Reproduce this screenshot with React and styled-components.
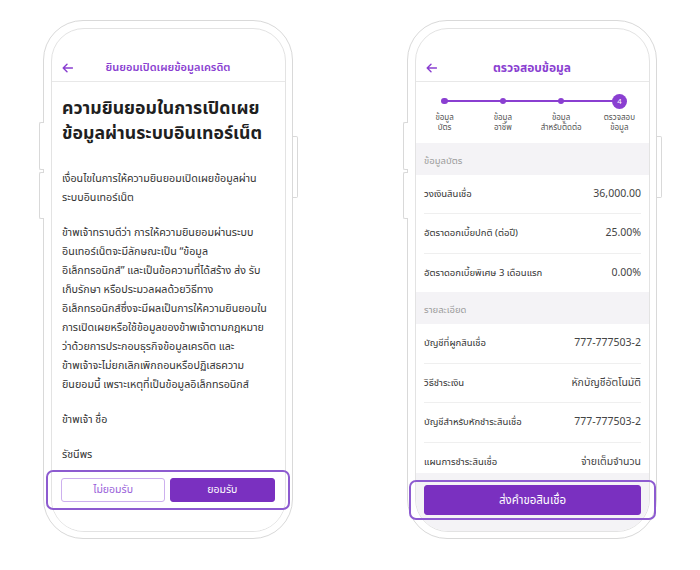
import React from "react";
import styled, { createGlobalStyle } from "styled-components";

const GlobalStyle = createGlobalStyle`
  html, body {
    margin: 0;
    padding: 0;
    background: #ffffff;
  }
  body {
    font-family: "Noto Sans Thai", "Noto Sans Thai Looped", "Noto Sans", "Liberation Sans", sans-serif;
    -webkit-font-smoothing: antialiased;
  }
`;

const PURPLE = "#7a30c0";
const PURPLE_TEXT = "#8a3fd1";

const Page = styled.div`
  width: 700px;
  height: 570px;
  box-sizing: border-box;
  padding: 20px 0 0 43px;
  display: flex;
  gap: 114px;
`;

const Phone = styled.div`
  position: relative;
  width: 250px;
  height: 519px;
  box-sizing: border-box;
  border: 1.5px solid #d9d9d9;
  border-radius: 40px;
  padding: 6.5px;
  background: #fff;
`;

const SideKey = styled.span`
  position: absolute;
  top: ${(p) => p.$top}px;
  height: ${(p) => p.$h}px;
  width: 5px;
  box-sizing: border-box;
  border: 1.5px solid #d9d9d9;
  background: #fff;
  ${(p) =>
    p.$side === "left"
      ? "left: -5px; border-right: none; border-radius: 2px 0 0 2px;"
      : "right: -5.5px; border-left: none; border-radius: 0 2px 2px 0;"}
`;

const Screen = styled.div`
  position: relative;
  height: 100%;
  box-sizing: border-box;
  border: 1.5px solid #e3e3e3;
  border-radius: 33px;
  display: flex;
  flex-direction: column;
  background: #fff;
`;

const Header = styled.div`
  margin-top: 26px;
  height: 26px;
  display: grid;
  grid-template-columns: 32px 1fr 32px;
  align-items: center;
  border-bottom: 1px solid #e8e8e8;
`;

const Back = styled.div`
  padding-left: 10px;
  display: flex;
  align-items: center;
`;

const HeaderTitle = styled.div`
  text-align: center;
  color: ${PURPLE_TEXT};
  font-size: ${(p) => (p.$big ? "12px" : "11px")};
  font-weight: ${(p) => (p.$big ? 700 : 600)};
  white-space: nowrap;
`;

const Content = styled.div`
  flex: 1;
  overflow: hidden;
  padding: 14px 10px 0 10.5px;
`;

const Headline = styled.h1`
  margin: 0 0 24px;
  font-size: 17.7px;
  line-height: 25px;
  font-weight: 700;
  color: #1f1f1f;
  white-space: nowrap;
`;

const Para = styled.p`
  margin: 0 0 16px;
  font-size: 10.7px;
  line-height: 19px;
  color: #333;
  white-space: nowrap;
`;

const Footer = styled.div`
  position: relative;
  display: grid;
  grid-template-columns: ${(p) => (p.$single ? "1fr" : "1fr 1fr")};
  gap: 5px;
  padding: ${(p) => p.$pad};
  background: ${(p) => (p.$tint ? "#f4f3f6" : "#fff")};
  border-radius: 0 0 32px 32px;
`;

const Highlight = styled.div`
  position: absolute;
  top: ${(p) => p.$top}px;
  left: ${(p) => p.$l}px;
  right: ${(p) => p.$r}px;
  height: 40px;
  box-sizing: border-box;
  border: 2px solid #8d5bd0;
  border-radius: 7px;
  pointer-events: none;
`;

const Button = styled.button`
  height: ${(p) => p.$h}px;
  border-radius: 3px;
  font-family: inherit;
  font-size: ${(p) => (p.$h > 26 ? "11.5px" : "10.5px")};
  font-weight: 400;
  cursor: pointer;
  border: 1px solid ${(p) => (p.$outline ? "#cdb0ee" : PURPLE)};
  background: ${(p) => (p.$outline ? "#fff" : PURPLE)};
  color: ${(p) => (p.$outline ? "#9a5fd9" : "#fff")};
  padding: 0;
`;

const Stepper = styled.div`
  position: relative;
  display: grid;
  grid-template-columns: repeat(4, 1fr);
  padding: 12px 0 9px;
  background: #fff;
`;

const Track = styled.div`
  position: absolute;
  top: 18.75px;
  left: 12.5%;
  right: 12.5%;
  height: 1.5px;
  background: ${PURPLE_TEXT};
`;

const Step = styled.div`
  position: relative;
  display: flex;
  flex-direction: column;
  align-items: center;
`;

const DotBox = styled.div`
  height: 15px;
  display: flex;
  align-items: center;
  justify-content: center;
`;

const Dot = styled.div`
  width: ${(p) => (p.$active ? 15 : 6.5)}px;
  height: ${(p) => (p.$active ? 15 : 6.5)}px;
  border-radius: 50%;
  background: ${PURPLE_TEXT};
  color: #fff;
  font-size: 8px;
  line-height: 15px;
  text-align: center;
  font-family: "Liberation Sans", sans-serif;
`;

const StepLabel = styled.div`
  margin-top: 4px;
  font-size: 8px;
  line-height: 10.5px;
  color: #555;
  text-align: center;
  white-space: nowrap;
`;

const List = styled.div`
  flex: 1;
  overflow: hidden;
  background: #f4f3f6;
`;

const SectionHead = styled.div`
  padding: 11px 8.5px 6px;
  font-size: 9.5px;
  line-height: 15px;
  color: #9b9b9b;
`;

const Group = styled.div`
  background: #fff;
  padding: 0 7.5px 0 8.5px;
`;

const Row = styled.div`
  height: 38.5px;
  display: flex;
  align-items: center;
  justify-content: space-between;
  border-bottom: 1px solid #efefef;
  &:last-child {
    border-bottom: none;
  }
`;

const RowLabel = styled.span`
  font-size: 9.5px;
  color: #333;
`;

const RowValue = styled.span`
  font-size: 10.5px;
  color: #444;
`;

const BackArrow = () => (
  <svg width="11" height="10" viewBox="0 0 11 10" fill="none">
    <path
      d="M10.5 5H1.2M5 1.2L1.2 5L5 8.8"
      stroke={PURPLE_TEXT}
      strokeWidth="1.4"
      strokeLinecap="round"
      strokeLinejoin="round"
    />
  </svg>
);

const PhoneFrame = ({ children }) => (
  <Phone>
    <SideKey $side="left" $top={101} $h={48} />
    <SideKey $side="left" $top={151} $h={47} />
    <SideKey $side="right" $top={115} $h={62} />
    <Screen>{children}</Screen>
  </Phone>
);

const steps = [
  ["ข้อมูล", "บัตร"],
  ["ข้อมูล", "อาชีพ"],
  ["ข้อมูล", "สำหรับติดต่อ"],
  ["ตรวจสอบ", "ข้อมูล"],
];

const cardRows = [
  ["วงเงินสินเชื่อ", "36,000.00"],
  ["อัตราดอกเบี้ยปกติ (ต่อปี)", "25.00%"],
  ["อัตราดอกเบี้ยพิเศษ 3 เดือนแรก", "0.00%"],
];

const detailRows = [
  ["บัญชีที่ผูกสินเชื่อ", "777-777503-2"],
  ["วิธีชำระเงิน", "หักบัญชีอัตโนมัติ"],
  ["บัญชีสำหรับหักชำระสินเชื่อ", "777-777503-2"],
  ["แผนการชำระสินเชื่อ", "จ่ายเต็มจำนวน"],
];

const ConsentScreen = () => (
  <PhoneFrame>
    <Header>
      <Back>
        <BackArrow />
      </Back>
      <HeaderTitle>ยินยอมเปิดเผยข้อมูลเครดิต</HeaderTitle>
    </Header>
    <Content>
      <Headline>
        ความยินยอมในการเปิดเผย
        <br />
        ข้อมูลผ่านระบบอินเทอร์เน็ต
      </Headline>
      <Para>
        เงื่อนไขในการให้ความยินยอมเปิดเผยข้อมูลผ่าน
        <br />
        ระบบอินเทอร์เน็ต
      </Para>
      <Para>
        ข้าพเจ้าทราบดีว่า การให้ความยินยอมผ่านระบบ
        <br />
        อินเทอร์เน็ตจะมีลักษณะเป็น “ข้อมูล
        <br />
        อิเล็กทรอนิกส์” และเป็นข้อความที่ได้สร้าง ส่ง รับ
        <br />
        เก็บรักษา หรือประมวลผลด้วยวิธีทาง
        <br />
        อิเล็กทรอนิกส์ซึ่งจะมีผลเป็นการให้ความยินยอมใน
        <br />
        การเปิดเผยหรือใช้ข้อมูลของข้าพเจ้าตามกฎหมาย
        <br />
        ว่าด้วยการประกอบธุรกิจข้อมูลเครดิต และ
        <br />
        ข้าพเจ้าจะไม่ยกเลิกเพิกถอนหรือปฏิเสธความ
        <br />
        ยินยอมนี้ เพราะเหตุที่เป็นข้อมูลอิเล็กทรอนิกส์
      </Para>
      <Para>ข้าพเจ้า ชื่อ</Para>
      <Para>รัชนีพร</Para>
    </Content>
    <Footer $pad="9px 10px 29px 9.5px">
      <Highlight $top={1.5} $l={-5.5} $r={-5.5} />
      <Button $outline $h={24}>
        ไม่ยอมรับ
      </Button>
      <Button $h={24}>ยอมรับ</Button>
    </Footer>
  </PhoneFrame>
);

const ReviewScreen = () => (
  <PhoneFrame>
    <Header>
      <Back>
        <BackArrow />
      </Back>
      <HeaderTitle $big>ตรวจสอบข้อมูล</HeaderTitle>
    </Header>
    <Stepper>
      <Track />
      {steps.map(([a, b], i) => (
        <Step key={i}>
          <DotBox>
            <Dot $active={i === 3}>{i === 3 ? "4" : null}</Dot>
          </DotBox>
          <StepLabel>
            {a}
            <br />
            {b}
          </StepLabel>
        </Step>
      ))}
    </Stepper>
    <List>
      <SectionHead>ข้อมูลบัตร</SectionHead>
      <Group>
        {cardRows.map(([l, v]) => (
          <Row key={l}>
            <RowLabel>{l}</RowLabel>
            <RowValue>{v}</RowValue>
          </Row>
        ))}
      </Group>
      <SectionHead>รายละเอียด</SectionHead>
      <Group>
        {detailRows.map(([l, v]) => (
          <Row key={l}>
            <RowLabel>{l}</RowLabel>
            <RowValue>{v}</RowValue>
          </Row>
        ))}
      </Group>
    </List>
    <Footer $single $tint $pad="12px 7.5px 15.5px 8.5px">
      <Highlight $top={7} $l={-6.5} $r={-7.5} />
      <Button $h={30}>ส่งคำขอสินเชื่อ</Button>
    </Footer>
  </PhoneFrame>
);

export default function App() {
  return (
    <>
      <GlobalStyle />
      <Page>
        <ConsentScreen />
        <ReviewScreen />
      </Page>
    </>
  );
}
